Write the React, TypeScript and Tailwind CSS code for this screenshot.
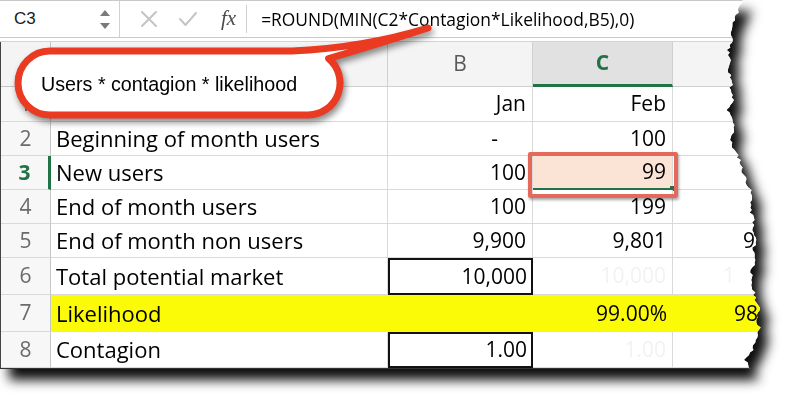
import React from "react";

const CELL_FONT = "font-['Open_Sans','Lato',sans-serif]";

function tornClip(): string {
  const pts: [number, number][] = [
    [0, 742], [10, 739], [20, 734], [30, 730], [40, 733], [50, 728], [60, 731], [70, 727],
    [80, 733], [90, 730], [100, 733], [110, 727], [120, 732], [130, 735], [140, 730],
    [150, 734], [160, 740], [170, 742], [180, 746], [190, 750], [200, 752], [210, 750],
    [220, 754], [230, 752], [240, 756], [250, 753], [260, 756], [270, 752], [280, 750],
    [290, 753], [300, 756], [310, 759], [320, 757], [330, 760], [340, 755], [350, 752],
    [360, 745], [368, 750],
  ];
  let seed = 11;
  const rnd = () => {
    seed = (seed * 9301 + 49297) % 233280;
    return seed / 233280;
  };
  const out: string[] = ["0px 0px"];
  for (let i = 0; i < pts.length - 1; i++) {
    const [y0, x0] = pts[i];
    const [y1, x1] = pts[i + 1];
    for (let y = y0; y < y1; y += 2.5) {
      const t = (y - y0) / (y1 - y0);
      const x = x0 + (x1 - x0) * t + (rnd() - 0.5) * 3.5;
      out.push(`${x.toFixed(1)}px ${y.toFixed(1)}px`);
    }
  }
  out.push("750px 369px", "0px 369px");
  return `polygon(${out.join(",")})`;
}

type RowDef = {
  n: string;
  h: string;
  a: string;
  b: string;
  c: string;
  d: string;
  dpad?: string;
  kind?: "box" | "yellow" | "sel";
};

const rows: RowDef[] = [
  { n: "1", h: "h-[35px]", a: "", b: "Jan", c: "Feb", d: "" },
  { n: "2", h: "h-[34px]", a: "Beginning of month users", b: "-", c: "100", d: "" },
  { n: "3", h: "h-[34px]", a: "New users", b: "100", c: "99", d: "", kind: "sel" },
  { n: "4", h: "h-[34px]", a: "End of month users", b: "100", c: "199", d: "" },
  { n: "5", h: "h-[34px]", a: "End of month non users", b: "9,900", c: "9,801", d: "9,", dpad: "pl-[70px]" },
  { n: "6", h: "h-[37px]", a: "Total potential market", b: "10,000", c: "10,000", d: "1", dpad: "pl-[50px]", kind: "box" },
  { n: "7", h: "h-[37px]", a: "Likelihood", b: "", c: "99.00%", d: "98", dpad: "pl-[61px]", kind: "yellow" },
  { n: "8", h: "h-[36px]", a: "Contagion", b: "1.00", c: "1.00", d: "", kind: "box" },
];

const COLS = "grid grid-cols-[50px_337px_145px_140px_140px]";

function SheetRow({ r }: { r: RowDef }) {
  const yellow = r.kind === "yellow";
  const box = r.kind === "box";
  const sel = r.kind === "sel";
  const grid = "border-b border-r border-[#d9d9d9]";
  return (
    <div className={`${COLS} ${r.h} ${CELL_FONT} text-[21px] text-black`}>
      <div
        className={`flex items-center justify-center border-b border-[#d9d9d9] bg-[#f7f7f7] ${
          sel ? "border-r-[3px] border-r-[#217346] font-bold text-[#217346]" : "border-r border-r-[#c6c6c6] text-[#6b6b6b]"
        }`}
      >
        {r.n}
      </div>
      <div className={`flex items-center pl-[5px] text-[22px] ${yellow ? "bg-[#fbfb07]" : `${grid} bg-white`}`}>{r.a}</div>
      <div
        className={`flex items-center justify-end ${r.b === "-" ? "pr-[34px]" : "pr-[6px]"} ${
          yellow ? "bg-[#fbfb07]" : box ? "bg-white shadow-[inset_0_0_0_2px_#111]" : `${grid} bg-white`
        }`}
      >
        {r.b}
      </div>
      <div
        className={`relative flex items-center justify-end pr-[6px] ${
          yellow
            ? "bg-[#fbfb07]"
            : sel
            ? "border-b-2 border-b-[#217346] border-r border-r-[#d9d9d9] bg-[#fbe4d5]"
            : `${grid} bg-white`
        } ${box ? "text-[#f1f2f5]" : ""}`}
      >
        {r.c}
        {sel && <div className="absolute -bottom-[3px] -right-[3px] h-[5px] w-[5px] bg-[#217346]" />}
      </div>
      <div
        className={`flex items-center ${r.dpad ?? ""} ${yellow ? "bg-[#fbfb07]" : `${grid} bg-white`} ${
          box ? "text-[#f1f2f5]" : ""
        }`}
      >
        {r.d}
      </div>
    </div>
  );
}

function FormulaBar() {
  return (
    <div className="flex h-[38px] items-center border-b border-t border-[#c9c9c9] bg-white">
      <div className="flex h-full w-[120px] items-center justify-between border-r border-[#d0d0d0] pl-[14px] pr-[8px]">
        <span className="font-['Liberation_Sans',Arial,sans-serif] text-[17px] text-[#1a1a1a]">C3</span>
        <svg width="12" height="26" viewBox="0 0 12 26">
          <path d="M6 4 L11 10 L1 10 Z" fill="#7a7a7a" />
          <path d="M6 23 L11 17 L1 17 Z" fill="#7a7a7a" />
        </svg>
      </div>
      <div className="flex h-full items-center pl-[20px]">
        <svg width="18" height="18" viewBox="0 0 18 18">
          <path d="M2 2 L16 16 M16 2 L2 16" stroke="#c4c4c4" strokeWidth="2" strokeLinecap="round" />
        </svg>
        <svg width="20" height="18" viewBox="0 0 20 18" className="ml-[20px]">
          <path d="M2 9 L7.5 15 L18 3" stroke="#c4c4c4" strokeWidth="2" fill="none" strokeLinecap="round" strokeLinejoin="round" />
        </svg>
        <span className="ml-[23px] font-['Liberation_Serif',serif] text-[21px] italic text-[#4a4a4a]">fx</span>
      </div>
      <div className="ml-[10px] h-[28px] border-l border-[#d0d0d0]" />
      <div className={`pl-[14px] ${CELL_FONT} text-[17.4px] text-black`}>=ROUND(MIN(C2*Contagion*Likelihood,B5),0)</div>
    </div>
  );
}

function Callout() {
  return (
    <div className="absolute left-0 top-0 h-[140px] w-[460px]">
      <svg width="460" height="140" viewBox="0 0 460 140" className="absolute left-0 top-0 drop-shadow-[2px_4px_3px_rgba(0,0,0,0.45)]">
        <path
          d="M 50 51 L 292 51 Q 362 48 428 28 Q 372 46 328.6 58.5 A 32 32 0 0 1 308 115 L 50 115 A 32 32 0 0 1 50 51 Z"
          fill="#ffffff"
          stroke="#ea3a21"
          strokeWidth="7"
          strokeLinejoin="round"
        />
      </svg>
      <div className="absolute left-[41px] top-[72px] font-['Liberation_Sans',Arial,sans-serif] text-[19.7px] leading-[24px] text-black">
        Users * contagion * likelihood
      </div>
    </div>
  );
}

export default function App() {
  const clip = tornClip();
  return (
    <div className="relative h-[399px] w-[789px] overflow-hidden bg-white">
      <div className="drop-shadow-[9px_11px_6px_rgba(0,0,0,0.95)]">
        <div className="relative h-[369px] w-[789px] overflow-hidden bg-white" style={{ clipPath: clip }}>
          <div className="w-[812px]">
            <FormulaBar />
            <div className="h-[4px] border-b border-[#d4d4d4] bg-white" />
            <div className="border-l border-[#444]">
              <div className={`${COLS} h-[45px] ${CELL_FONT} text-[21px]`}>
                <div className="border-b border-r border-[#c6c6c6] bg-[#f4f4f4]" />
                <div className="border-b border-r border-[#d0d0d0] bg-[#f4f4f4]" />
                <div className="flex items-center justify-center border-b border-r border-[#d0d0d0] bg-[#f4f4f4] text-[#5a5a5a]">B</div>
                <div className="flex items-center justify-center border-b-[3px] border-r border-b-[#217346] border-r-[#d0d0d0] bg-[#e1e1e1] font-bold text-[#217346]">
                  C
                </div>
                <div className="border-b border-r border-[#d0d0d0] bg-[#f4f4f4]" />
              </div>
              {rows.map((r) => (
                <SheetRow key={r.n} r={r} />
              ))}
            </div>
            <div className="h-[1px] bg-[#333]" />
          </div>
          <div className="absolute left-[528px] top-[152px] h-[46px] w-[150px] rounded-[2px] border-[4px] border-[#e4695b] shadow-[1px_2px_3px_rgba(0,0,0,0.35)]" />
          <Callout />
        </div>
      </div>
    </div>
  );
}
